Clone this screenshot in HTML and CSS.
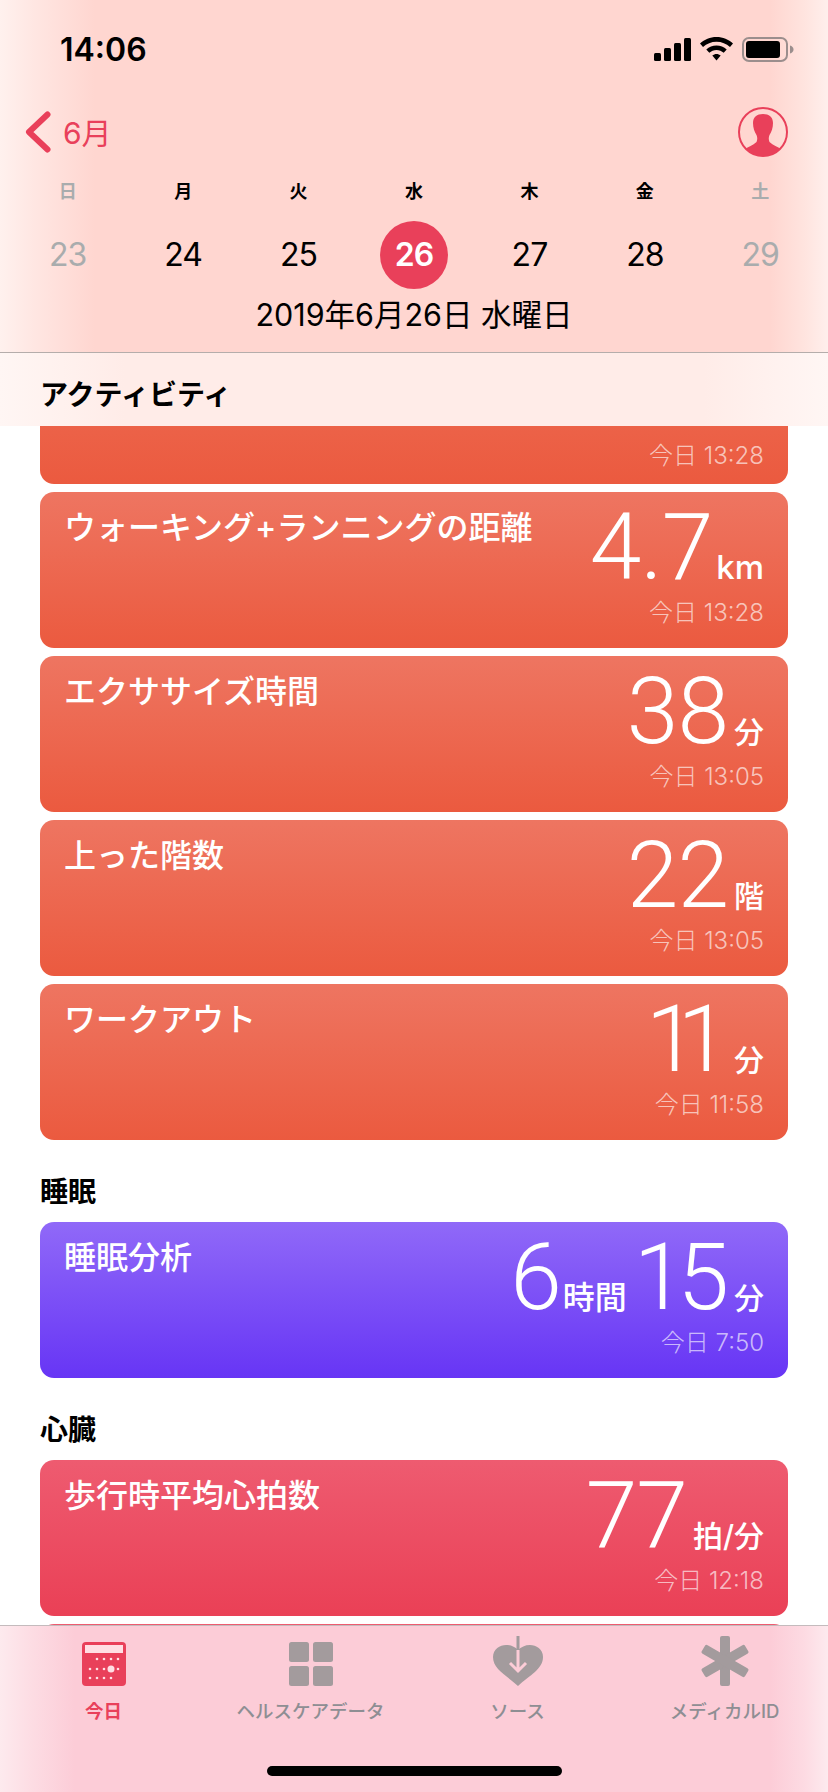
FILE: index.html
```html
<!DOCTYPE html>
<html lang="ja">
<head>
    <meta charset="UTF-8">
    <meta name="viewport" content="width=device-width, initial-scale=1.0">
    <title>ヘルスケア</title>
    <link rel="stylesheet" href="styles.css">
</head>
<body>
    <div class="screen">
        <header class="top-bar">
            <div class="status-bar">
                <span class="clock">14:06</span>
                <div class="status-icons">
                    <svg width="37" height="23" viewBox="0 0 37 23"><rect x="0" y="15" width="7" height="8" rx="1.5"/><rect x="10" y="10" width="7" height="13" rx="1.5"/><rect x="20" y="5" width="7" height="18" rx="1.5"/><rect x="30" y="0" width="7" height="23" rx="1.5"/></svg>
                    <svg width="33" height="24" viewBox="0 0 33 24"><path d="M16.5 0C10 0 4.500 2.500 0 6.500L3 10C6.700 6.700 11.300 4.700 16.500 4.700S26.300 6.700 30 10L33 6.500C28.500 2.500 23 0 16.500 0Z"/><path d="M16.500 8.500C12.600 8.500 9.100 10 6.300 12.500L9.300 15.800C11.300 14.100 13.700 13 16.500 13S21.700 14.100 23.700 15.800L26.700 12.500C23.900 10 20.400 8.500 16.500 8.500Z"/><path d="M16.500 17C15 17 13.500 17.600 12.300 18.600L16.500 23.500L20.700 18.600C19.500 17.600 18 17 16.500 17Z"/></svg>
                    <svg width="52" height="25" viewBox="0 0 52 25"><rect x="1" y="1" width="44" height="23" rx="6" fill="none" stroke="#9b8e8d" stroke-width="2"/><rect x="4" y="4" width="34" height="17" rx="3"/><path d="M48 8.500C50 9 51.500 10.500 51.500 12.500S50 16 48 16.500Z" fill="#9b8e8d"/></svg>
                </div>
            </div>
            <div class="nav-row">
                <a class="back-link">
                    <svg width="26" height="42" viewBox="0 0 26 42"><path d="M22.500 3.500L4 21L22.500 38.500" fill="none" stroke="#e9405a" stroke-width="6" stroke-linecap="round" stroke-linejoin="round"/></svg>
                    <span>6月</span>
                </a>
                <svg class="avatar" width="50" height="50" viewBox="0 0 50 50">
                    <defs><clipPath id="avatarClip"><circle cx="25" cy="25" r="24"/></clipPath></defs>
                    <circle cx="25" cy="25" r="24" fill="none" stroke="#e9405a" stroke-width="2"/>
                    <path clip-path="url(#avatarClip)" d="M25 7C19 7 15 10 15 16C15 21 16.500 25 18.500 28C19.500 30 19.500 33 18.500 35C15 38.500 10 40 7 42V50H43V42C40 40 35 38.500 31.500 35C30.500 33 30.500 30 31.500 28C33.500 25 35 21 35 16C35 10 31 7 25 7Z" fill="#e9405a"/>
                </svg>
            </div>
            <div class="week-grid">
                <span class="weekday off">日</span>
                <span class="weekday">月</span>
                <span class="weekday">火</span>
                <span class="weekday">水</span>
                <span class="weekday">木</span>
                <span class="weekday">金</span>
                <span class="weekday off">土</span>
                <span class="day off">23</span>
                <span class="day">24</span>
                <span class="day">25</span>
                <span class="day today"><b>26</b></span>
                <span class="day">27</span>
                <span class="day">28</span>
                <span class="day off">29</span>
            </div>
            <div class="date-line">2019年6月26日 水曜日</div>
        </header>

        <div class="section-bar">アクティビティ</div>

        <main class="list">
            <div class="card orange cut-card">
                <div class="card-time">今日 13:28</div>
            </div>
            <div class="card orange">
                <div class="card-title">ウォーキング+ランニングの距離</div>
                <div class="card-side">
                    <div class="card-value">4.7<small class="latin">km</small></div>
                    <div class="card-time">今日 13:28</div>
                </div>
            </div>
            <div class="card orange">
                <div class="card-title">エクササイズ時間</div>
                <div class="card-side">
                    <div class="card-value">38<small>分</small></div>
                    <div class="card-time">今日 13:05</div>
                </div>
            </div>
            <div class="card orange">
                <div class="card-title">上った階数</div>
                <div class="card-side">
                    <div class="card-value">22<small>階</small></div>
                    <div class="card-time">今日 13:05</div>
                </div>
            </div>
            <div class="card orange">
                <div class="card-title">ワークアウト</div>
                <div class="card-side">
                    <div class="card-value"><span class="one-pair">1</span>1<small>分</small></div>
                    <div class="card-time">今日 11:58</div>
                </div>
            </div>

            <h2 class="group-title">睡眠</h2>
            <div class="card purple">
                <div class="card-title">睡眠分析</div>
                <div class="card-side">
                    <div class="card-value">6<small class="hours">時間</small><span class="one">1</span>5<small>分</small></div>
                    <div class="card-time">今日 7:50</div>
                </div>
            </div>

            <h2 class="group-title">心臓</h2>
            <div class="card red">
                <div class="card-title">歩行時平均心拍数</div>
                <div class="card-side">
                    <div class="card-value">77<small>拍/分</small></div>
                    <div class="card-time">今日 12:18</div>
                </div>
            </div>
            <div class="card red"></div>
        </main>

        <nav class="tab-bar">
            <div class="tab active">
                <svg width="44" height="50" viewBox="0 0 44 50">
                    <rect x="0" y="6" width="44" height="44" rx="4" fill="#e9405a"/>
                    <rect x="3" y="9" width="38" height="8" fill="#ffdfe4"/>
                    <g fill="#ffdfe4">
                        <circle cx="15" cy="23" r="1.300"/><circle cx="22" cy="23" r="1.300"/><circle cx="29" cy="23" r="1.300"/><circle cx="36" cy="23" r="1.300"/>
                        <circle cx="8" cy="33" r="1.300"/><circle cx="15" cy="33" r="1.300"/><circle cx="22" cy="33" r="1.300"/><circle cx="29" cy="33" r="3.500"/><circle cx="36" cy="33" r="1.300"/>
                        <circle cx="8" cy="42" r="1.300"/><circle cx="15" cy="42" r="1.300"/><circle cx="22" cy="42" r="1.300"/><circle cx="29" cy="42" r="1.300"/>
                    </g>
                </svg>
                <span>今日</span>
            </div>
            <div class="tab">
                <svg width="44" height="50" viewBox="0 0 44 50" fill="#a39b9d">
                    <rect x="0" y="6" width="20" height="20" rx="2.500"/><rect x="24" y="6" width="20" height="20" rx="2.500"/>
                    <rect x="0" y="30" width="20" height="20" rx="2.500"/><rect x="24" y="30" width="20" height="20" rx="2.500"/>
                </svg>
                <span>ヘルスケアデータ</span>
            </div>
            <div class="tab">
                <svg width="50" height="50" viewBox="0 0 50 50">
                    <path d="M25 50C13 39 0 33 0 21C0 13 7 9 13 9C18 9 22 11 25 14C28 11 32 9 37 9C43 9 50 13 50 21C50 33 37 39 25 50Z" fill="#a39b9d"/>
                    <path d="M25 0V14" fill="none" stroke="#a39b9d" stroke-width="3"/>
                    <path d="M25 14V35M17 27L25 35L33 27" fill="none" stroke="#fcccd7" stroke-width="3"/>
                </svg>
                <span>ソース</span>
            </div>
            <div class="tab">
                <svg width="48" height="50" viewBox="0 0 48 50" fill="#a39b9d">
                    <rect x="19" y="0" width="10" height="50" rx="2"/>
                    <rect x="19" y="0" width="10" height="50" rx="2" transform="rotate(60 24 25)"/>
                    <rect x="19" y="0" width="10" height="50" rx="2" transform="rotate(-60 24 25)"/>
                </svg>
                <span>メディカルID</span>
            </div>
        </nav>
        <div class="home-bar"></div>
    </div>
</body>
</html>
```

FILE: styles.css
```css
* {
    box-sizing: border-box;
}
body {
    margin: 0;
    background-color: #fff;
    font-family: 'Inter', 'Noto Sans CJK JP', sans-serif;
    color: #000;
}
.screen {
    position: relative;
    width: 828px;
    height: 1792px;
    display: flex;
    flex-direction: column;
    overflow: hidden;
}

/* header */
.top-bar {
    height: 353px;
    flex: none;
    border-bottom: 1px solid #b5adab;
    background:
        linear-gradient(90deg, #fff1ee 0, #ffe6e2 35px, #ffd6d0 95px, #ffd6d0 770px, #ffe4df 805px, #ffefec 828px);
}
.status-bar {
    height: 98px;
    display: flex;
    justify-content: space-between;
    align-items: center;
    padding: 0 34px 0 60px;
}
.clock {
    font-size: 32px;
    font-weight: 600;
}
.status-icons {
    display: flex;
    align-items: center;
    gap: 9px;
}
.nav-row {
    height: 68px;
    display: flex;
    justify-content: space-between;
    align-items: center;
    padding: 0 40px 0 25px;
}
.back-link {
    display: flex;
    align-items: center;
    gap: 12px;
    color: #e9405a;
    font-size: 30px;
}
.back-link span {
    padding-bottom: 3px;
}
.week-grid {
    display: grid;
    grid-template-columns: repeat(7, 1fr);
    grid-template-rows: 26px 68px;
    row-gap: 16px;
    margin-top: 13px;
    padding: 0 10px;
}
.weekday {
    font-size: 18px;
    font-weight: 700;
    text-align: center;
    line-height: 26px;
}
.day {
    font-size: 32px;
    letter-spacing: -1px;
    text-align: center;
    line-height: 68px;
}
.off {
    color: #a9acad;
}
.today b {
    display: block;
    width: 68px;
    height: 68px;
    margin: 0 auto;
    border-radius: 50%;
    background-color: #e9405a;
    color: #fff;
    font-weight: 600;
}
.date-line {
    margin-top: 6px;
    text-align: center;
    font-size: 30.5px;
    line-height: 40px;
}
.section-bar {
    height: 73px;
    flex: none;
    padding: 22px 0 0 40px;
    font-size: 28px;
    font-weight: 700;
    line-height: 40px;
    background: linear-gradient(90deg, #fff6f4 0, #ffece8 15%, #ffece8 85%, #fff6f4 100%);
}

/* list */
.list {
    flex: 1;
    min-height: 0;
    overflow: hidden;
    padding: 0 40px;
}
.card {
    height: 156px;
    margin-bottom: 8px;
    padding: 14px 24px 0;
    border-radius: 14px;
    display: flex;
    justify-content: space-between;
    color: #fff;
}
.cut-card {
    height: 58px;
    border-radius: 0 0 14px 14px;
    justify-content: flex-end;
    align-items: flex-end;
    padding-bottom: 14px;
}
.orange {
    background: linear-gradient(#ee7561, #eb5a3f);
}
.cut-card.orange {
    background: linear-gradient(#ec6248, #eb5a3f);
}
.purple {
    background: linear-gradient(#9069f8, #6735f5);
}
.red {
    background: linear-gradient(#ee5b70, #ea4056);
}
.card-title {
    font-size: 32px;
    font-weight: 500;
    line-height: 44px;
}
.card-side {
    display: flex;
    flex-direction: column;
    align-items: flex-end;
}
.card-value {
    height: 90px;
    font-family: 'Roboto', 'Noto Sans CJK JP', sans-serif;
    font-size: 93px;
    font-weight: 300;
    letter-spacing: -1px;
    line-height: 84px;
    white-space: nowrap;
}
.card-value small {
    font-family: 'Inter', 'Noto Sans CJK JP', sans-serif;
    font-size: 30px;
    font-weight: 500;
    letter-spacing: 0;
    line-height: 1;
    margin-left: 6px;
}
.card-value small.latin {
    font-size: 33px;
    margin-left: 4px;
}
.card-value small.hours {
    font-size: 32px;
    margin: 0 7px 0 2px;
}
.one {
    letter-spacing: -8px;
}
.one-pair {
    letter-spacing: -20px;
}
.card-side .card-time {
    margin-top: 3px;
}
.card-time {
    font-size: 24px;
    font-weight: 300;
    line-height: 28px;
    color: rgba(255, 255, 255, 0.65);
}
.group-title {
    margin: 32px 0 10px;
    font-size: 28px;
    font-weight: 700;
    line-height: 40px;
}

/* tab bar */
.tab-bar {
    height: 167px;
    flex: none;
    border-top: 1px solid #c4bbbd;
    display: grid;
    grid-template-columns: repeat(4, 1fr);
    padding-top: 10px;
    background:
        linear-gradient(90deg, #fdeaee 0, #fddde4 30px, #fcccd7 75px, #fcccd7 770px, #fddbe3 805px, #fdeaee 828px);
}
.tab {
    display: flex;
    flex-direction: column;
    align-items: center;
    gap: 13px;
    color: #8e8e93;
    font-size: 18.5px;
    font-weight: 500;
    line-height: 24px;
}
.tab.active {
    color: #e9405a;
    font-weight: 700;
}
.home-bar {
    position: absolute;
    left: 267px;
    bottom: 16px;
    width: 295px;
    height: 10px;
    border-radius: 5px;
    background-color: #000;
}
```
